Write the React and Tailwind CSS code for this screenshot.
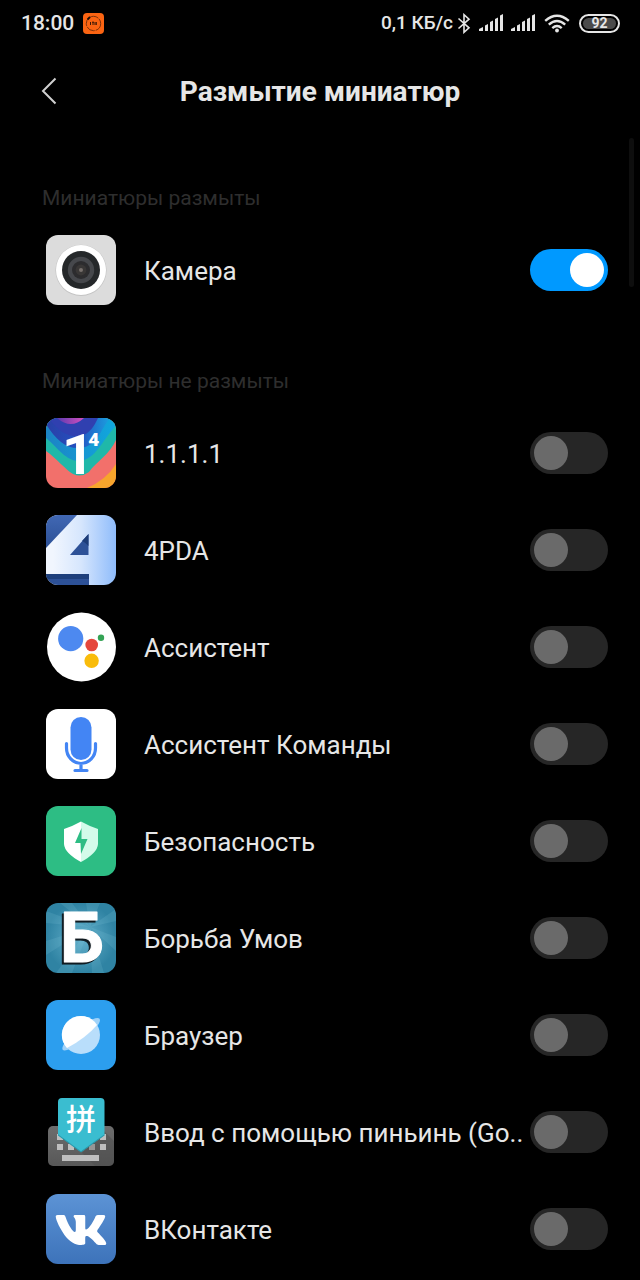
import React from "react";
import { FaVk } from "react-icons/fa";

function CameraIcon() {
  return (
    <svg viewBox="0 0 70 70" className="size-full" aria-hidden="true">
      <rect width="70" height="70" rx="12" fill="#dcdcdc" />
      <circle cx="35" cy="35.3" r="25.6" fill="#c4c4c4" />
      <circle cx="35" cy="35" r="25" fill="#fff" />
      <circle cx="35" cy="35" r="19" fill="#25282a" />
      <circle cx="35" cy="35" r="13.2" fill="#46484c" />
      <circle cx="35" cy="35" r="9" fill="#2c2c2e" />
      <circle cx="35" cy="35" r="5.4" fill="#393736" />
      <circle cx="35" cy="35" r="2" fill="#77706c" />
    </svg>
  );
}

function DnsIcon() {
  return (
    <svg viewBox="0 0 70 70" className="size-full" aria-hidden="true">
      <defs>
        <clipPath id="dns-clip">
          <rect width="70" height="70" rx="12" />
        </clipPath>
        <linearGradient id="dns-blue" x1="0" y1="0" x2="1" y2="0">
          <stop offset="0" stopColor="#2a3fa6" />
          <stop offset="0.5" stopColor="#2450c0" />
          <stop offset="1" stopColor="#1b9fdf" />
        </linearGradient>
        <linearGradient id="dns-cyan" x1="0" y1="0" x2="1" y2="0">
          <stop offset="0" stopColor="#1c83c4" />
          <stop offset="1" stopColor="#10a8de" />
        </linearGradient>
        <linearGradient id="dns-pink" x1="0" y1="0" x2="1" y2="0">
          <stop offset="0" stopColor="#5c3bb0" />
          <stop offset="1" stopColor="#d44fbe" />
        </linearGradient>
      </defs>
      <g clipPath="url(#dns-clip)">
        <rect width="70" height="70" fill="#f2706b" />
        <path d="M41 70 Q60 62 70 46 V70Z" fill="#f7a52c" />
        <path d="M0 33 C10 40 20 52 27 56 Q35 60 43 54 C50 44 64 36 70 22 V0 H0Z" fill="#1fb8a9" />
        <path d="M0 20 C12 30 20 43 33 43 C50 42 56 22 70 8 V0 H0Z" fill="url(#dns-cyan)" />
        <path d="M0 6 C10 22 20 31 34 30 C52 28 54 12 64 0 H0Z" fill="url(#dns-blue)" />
        <path d="M3 0 C12 14 24 20 34 18 C44 16 48 8 52 0Z" fill="#3040b0" />
        <path d="M11 0 Q25 12 38 0Z" fill="url(#dns-pink)" />
      </g>
      <text x="16" y="56" fill="#fff" className="font-['Roboto',sans-serif] text-[56px] font-bold">
        1
        <tspan dx="-6" y="28" className="text-[19px] font-black">4</tspan>
      </text>
    </svg>
  );
}

function ForumIcon() {
  return (
    <svg viewBox="0 0 70 70" className="size-full" aria-hidden="true">
      <defs>
        <clipPath id="forum-clip">
          <rect width="70" height="70" rx="12" />
        </clipPath>
        <linearGradient id="forum-light" x1="0" y1="0" x2="1" y2="0">
          <stop offset="0.1" stopColor="#f1f6fe" />
          <stop offset="0.5" stopColor="#d6e6fd" />
          <stop offset="1" stopColor="#8fbcfb" />
        </linearGradient>
        <linearGradient id="forum-dark" x1="0" y1="0" x2="0" y2="1">
          <stop offset="0" stopColor="#4168b4" />
          <stop offset="1" stopColor="#2c5096" />
        </linearGradient>
      </defs>
      <g clipPath="url(#forum-clip)">
        <rect width="70" height="70" fill="url(#forum-light)" />
        <path d="M0 0 H31 L0 33Z" fill="url(#forum-dark)" />
        <path d="M42.500 19 V40 H24Z" fill="#2d5197" />
        <path d="M42.500 19 V31 Q39 27 36 26Z" fill="#1c3c78" />
        <path d="M0 59 H43 V70 H0Z" fill="#2d5197" />
        <path d="M0 59 H43 V64 H0Z" fill="#1d3f7c" />
      </g>
    </svg>
  );
}

function AssistantIcon() {
  return (
    <svg viewBox="0 0 70 70" className="size-full" aria-hidden="true">
      <circle cx="35.500" cy="35" r="34.500" fill="#fff" />
      <circle cx="24.700" cy="26.700" r="12.600" fill="#4d89f0" />
      <circle cx="45.700" cy="33" r="6.300" fill="#e5473c" />
      <circle cx="55" cy="25.800" r="3.200" fill="#34a355" />
      <circle cx="45.600" cy="48.800" r="7.200" fill="#f9bc0b" />
    </svg>
  );
}

function MicIcon() {
  return (
    <svg viewBox="0 0 70 70" className="size-full" aria-hidden="true">
      <rect width="70" height="70" rx="12" fill="#fff" />
      <rect x="24.500" y="8" width="21" height="43" rx="10.500" fill="#4385f4" />
      <path
        d="M20.500 34.500 V39 A14.500 15.500 0 0 0 49.500 39 V34.500 M35 55 V61 M29 61.500 H41"
        fill="none"
        stroke="#4385f4"
        strokeWidth="3.200"
        strokeLinecap="round"
      />
    </svg>
  );
}

function SecurityIcon() {
  return (
    <svg viewBox="0 0 70 70" className="size-full" aria-hidden="true">
      <rect width="70" height="70" rx="12" fill="#2dbd84" />
      <path d="M35 15.500 Q27 20 18 23 V38 Q18.500 47 35 56Z" fill="#fff" />
      <path d="M35 15.500 Q43 20 52 23 V38 Q51.500 47 35 56Z" fill="#d3fbea" />
      <path d="M35.500 22 L29 37 H34.500 L35 48 L41.500 33 H35.500Z" fill="#2dbd84" />
    </svg>
  );
}

function QuizIcon() {
  return (
    <svg viewBox="0 0 70 70" className="size-full overflow-visible" aria-hidden="true">
      <defs>
        <clipPath id="quiz-clip">
          <rect width="70" height="70" rx="12" />
        </clipPath>
        <radialGradient id="quiz-bg">
          <stop offset="0" stopColor="#65b1cc" />
          <stop offset="1" stopColor="#2f83a3" />
        </radialGradient>
      </defs>
      <g clipPath="url(#quiz-clip)">
        <rect width="70" height="70" fill="url(#quiz-bg)" />
        <g fill="#8bcbe0" opacity="0.160">
          <path d="M44 24 L40 0 H54Z" />
          <path d="M44 24 L70 6 V18Z" />
          <path d="M44 24 L70 34 V48Z" />
          <path d="M44 24 L58 70 H46Z" />
          <path d="M44 24 L26 70 H10Z" />
          <path d="M44 24 L0 52 V38Z" />
          <path d="M44 24 L0 20 V8Z" />
          <path d="M44 24 L14 0 H26Z" />
        </g>
      </g>
      <text
        x="14"
        y="59"
        fill="#fff"
        stroke="#fff"
        strokeWidth="1"
        strokeLinejoin="round"
        className="font-['Roboto',sans-serif] text-[70px] font-bold drop-shadow-[-2px_2px_0_#101a20]"
      >
        Б
      </text>
    </svg>
  );
}

function BrowserIcon() {
  return (
    <svg viewBox="0 0 70 70" className="size-full" aria-hidden="true">
      <rect width="70" height="70" rx="12" fill="#2c9eee" />
      <path d="M46 19.500 Q54 16.500 54 20 Q54 23 49 29 Z M24 49 Q18 51.500 16.500 49.500 Q15.500 47 20 41Z" fill="#9fd2f9" />
      <circle cx="35" cy="35" r="19" fill="#b9defb" />
      <path d="M21 48 A19 19 0 1 1 51 25 Q40 38 21 48Z" fill="#fff" />
    </svg>
  );
}

function PinyinIcon() {
  return (
    <svg viewBox="0 0 70 70" className="size-full" aria-hidden="true">
      <defs>
        <linearGradient id="pinyin-key" x1="0" y1="0" x2="0" y2="1">
          <stop offset="0" stopColor="#6d6d6d" />
          <stop offset="1" stopColor="#585858" />
        </linearGradient>
      </defs>
      <rect x="2" y="29" width="66" height="40" rx="5" fill="url(#pinyin-key)" />
      <path d="M36 56 L58 34 L68 44 V64 Q68 69 63 69 H49Z" fill="#4b4b4b" opacity="0.450" />
      <g fill="#bfbfbf">
        <rect x="11" y="37" width="6" height="6" />
        <rect x="54" y="37" width="6" height="6" />
        <rect x="11" y="47" width="6" height="6" />
        <rect x="22" y="47" width="6" height="6" />
        <rect x="43" y="47" width="6" height="6" fill="#969696" />
        <rect x="54" y="47" width="6" height="6" />
        <rect x="16" y="58" width="37" height="6" />
      </g>
      <path d="M12 5 Q12 1 16 1 H54.500 Q58.500 1 58.500 5 V38 L35 55 L12 38Z" fill="#3abdd0" />
      <path d="M12 37.300 L35 54.300 L58.500 37.300 V38.500 L35 55.500 L12 38.500Z" fill="#2899ac" />
      <text x="35" y="33" textAnchor="middle" fill="#fff" className="font-['Noto_Sans_CJK_SC',sans-serif] text-[30px] font-medium">拼</text>
    </svg>
  );
}

function VkIcon() {
  return (
    <span className="flex size-full items-center justify-center rounded-[12px] bg-linear-to-b from-[#5c93d5] to-[#3d73ba] pt-[2px] text-white">
      <FaVk className="size-[54px]" aria-hidden="true" />
    </span>
  );
}

const blurred = [{ name: "Камера", Icon: CameraIcon, on: true }];

const notBlurred = [
  { name: "1.1.1.1", Icon: DnsIcon },
  { name: "4PDA", Icon: ForumIcon },
  { name: "Ассистент", Icon: AssistantIcon },
  { name: "Ассистент Команды", Icon: MicIcon },
  { name: "Безопасность", Icon: SecurityIcon },
  { name: "Борьба Умов", Icon: QuizIcon },
  { name: "Браузер", Icon: BrowserIcon },
  { name: "Ввод с помощью пиньинь (Go..", Icon: PinyinIcon },
  { name: "ВКонтакте", Icon: VkIcon },
];

function Signal() {
  return (
    <svg viewBox="0 0 24 18" className="h-[18px] w-[24px]" fill="#e6e6e6" aria-hidden="true">
      <path d="M0 17 V15 L4 13 V17Z M6 17 V11.500 L9 10 V17Z M11 17 V8 L14 6.500 V17Z M16 17 V5 L19 3.500 V17Z M21 17 V1.500 L24 0 V17Z" />
    </svg>
  );
}

function StatusBar() {
  return (
    <div className="flex h-[46px] items-center pr-[20px] pl-[21px] font-medium text-[#e6e6e6]">
      <span className="text-[21px] leading-6">18:00</span>
      <svg viewBox="0 0 21 21" className="ml-[9px] size-[21px]" aria-hidden="true">
        <rect width="21" height="21" rx="4" fill="#fb6412" />
        <circle cx="10.500" cy="10.500" r="7.200" fill="none" stroke="#5a250a" strokeWidth="0.800" strokeDasharray="9 1" />
        <path d="M4.500 6.500 L7 4" stroke="#1d0d05" strokeWidth="1.800" />
        <path d="M7.500 9 V12 M9 9.200 H11 M10 9 V12 M12 9 V12 M13.300 9 V12" stroke="#3a1806" strokeWidth="1" />
      </svg>
      <div className="ml-auto flex items-center">
        <span className="text-[19px] leading-6">0,1 КБ/с</span>
        <svg viewBox="0 0 14 21" className="ml-[4px] h-[21px] w-[14px]" fill="none" stroke="#e6e6e6" strokeWidth="1.600" aria-hidden="true">
          <path d="M1.500 5.500 L12 14.800 L7 19.300 V1.700 L12 6.200 L1.500 15.500" />
        </svg>
        <span className="ml-[8px] flex gap-[8px]">
          <Signal />
          <Signal />
        </span>
        <svg viewBox="0 0 26 19" className="ml-[9px] h-[19px] w-[26px]" fill="none" stroke="#e6e6e6" strokeWidth="2.400" aria-hidden="true">
          <path d="M1.200 6.800 Q13 -3.400 24.800 6.800 M4.800 10.600 Q13 3.400 21.200 10.600 M8.300 14.200 Q13 10 17.700 14.200" />
          <circle cx="13" cy="16.500" r="1.900" fill="#e6e6e6" stroke="none" />
        </svg>
        <span className="ml-[9px] flex h-[19px] w-[41px] rounded-full border-2 border-[#e6e6e6] p-[2px]">
          <span className="flex flex-1 items-center justify-center rounded-full bg-[#4a4a4a] text-[14px] leading-none font-bold">92</span>
        </span>
      </div>
    </div>
  );
}

function AppRow({ name, Icon, on = false }) {
  return (
    <li>
      <label className="flex items-center pt-[13px] pr-8 pb-[14px] pl-[46px]">
        <span className="size-[70px] shrink-0">
          <Icon />
        </span>
        <span className="ml-7 min-w-0 flex-1 truncate pt-[2px] text-[26px] leading-8 text-[#e6e6e6]">{name}</span>
        <input
          type="checkbox"
          role="switch"
          defaultChecked={on}
          className="flex h-[42px] w-[78px] shrink-0 appearance-none rounded-full bg-[#262626] p-1 before:size-[34px] before:rounded-full before:bg-[#6a6a6a] before:content-[''] checked:justify-end checked:bg-[#0099ff] checked:before:bg-white"
        />
      </label>
    </li>
  );
}

function Section({ title, apps }) {
  return (
    <section className="pt-[38px]">
      <h2 className="flex h-[48px] items-center pl-[42px] text-[21px] leading-7 text-[#2e2e2e]">{title}</h2>
      <ul>
        {apps.map((app) => (
          <AppRow key={app.name} {...app} />
        ))}
      </ul>
    </section>
  );
}

export default function App() {
  return (
    <div className="min-h-screen bg-black font-['Roboto',sans-serif]">
      <StatusBar />
      <header className="grid h-[90px] grid-cols-[96px_1fr_96px] items-center">
        <button type="button" aria-label="Назад" className="flex h-full items-center pl-[41px]">
          <svg viewBox="0 0 16 28" className="h-7 w-4" fill="none" stroke="#d0d0d0" strokeWidth="2" aria-hidden="true">
            <path d="M14.500 1.500 L2 14 L14.500 26.500" />
          </svg>
        </button>
        <h1 className="pt-[2px] text-center text-[28px] leading-9 font-bold text-[#e6e6e6]">Размытие миниатюр</h1>
      </header>
      <main className="relative">
        <Section title="Миниатюры размыты" apps={blurred} />
        <Section title="Миниатюры не размыты" apps={notBlurred} />
        <div className="absolute top-[2px] right-[6px] h-[149px] w-[5px] rounded-full bg-[#0e0e0e]" />
      </main>
    </div>
  );
}
